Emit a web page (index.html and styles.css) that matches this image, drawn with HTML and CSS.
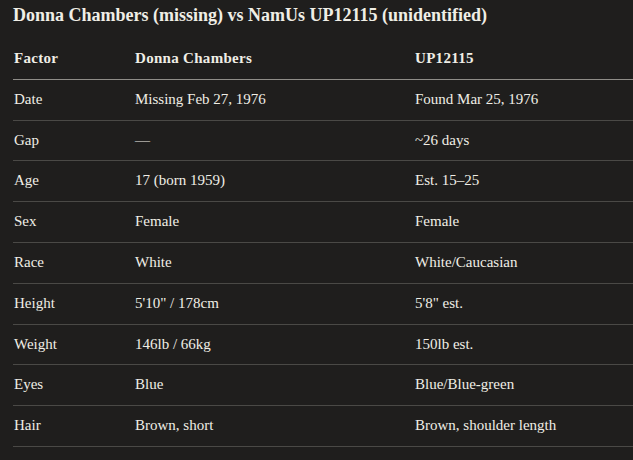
FILE: index.html
```html
<!DOCTYPE html>
<html>
<head>
<meta charset="utf-8">
<link rel="stylesheet" href="styles.css">
</head>
<body>
<h1 class="title">Donna Chambers (missing) vs NamUs UP12115 (unidentified)</h1>
<table class="cmp">
<thead>
<tr><th class="c1">Factor</th><th class="c2">Donna Chambers</th><th class="c3">UP12115</th></tr>
</thead>
<tbody>
<tr><td>Date</td><td>Missing Feb 27, 1976</td><td>Found Mar 25, 1976</td></tr>
<tr><td>Gap</td><td>—</td><td>~26 days</td></tr>
<tr><td>Age</td><td>17 (born 1959)</td><td>Est. 15–25</td></tr>
<tr><td>Sex</td><td>Female</td><td>Female</td></tr>
<tr><td>Race</td><td>White</td><td>White/Caucasian</td></tr>
<tr><td>Height</td><td>5'10" / 178cm</td><td>5'8" est.</td></tr>
<tr><td>Weight</td><td>146lb / 66kg</td><td>150lb est.</td></tr>
<tr><td>Eyes</td><td>Blue</td><td>Blue/Blue-green</td></tr>
<tr><td>Hair</td><td>Brown, short</td><td>Brown, shoulder length</td></tr>
</tbody>
</table>
</body>
</html>
```
FILE: styles.css
```css
html, body {
  margin: 0;
  padding: 0;
  background: #1f1e1d;
}
body {
  padding-left: 13px;
  font-family: "Liberation Serif", "Times New Roman", serif;
  color: #f0eee6;
}
.title {
  margin: 0;
  font-size: 18px;
  font-weight: bold;
  line-height: 30px;
  color: #f0eee6;
}
.cmp {
  margin-top: 9px;
  width: 620px;
  border-collapse: collapse;
  font-size: 15px;
}
.cmp th, .cmp td {
  text-align: left;
  padding: 9px 0 9px 1px;
  line-height: 21.8px;
  vertical-align: middle;
}
.cmp th {
  font-weight: bold;
  letter-spacing: 0.3px;
  border-bottom: 1px solid #8f8d88;
}
.cmp td {
  border-bottom: 1px solid #4a4946;
}
.c1 { width: 120px; }
.c2 { width: 279px; }
```
